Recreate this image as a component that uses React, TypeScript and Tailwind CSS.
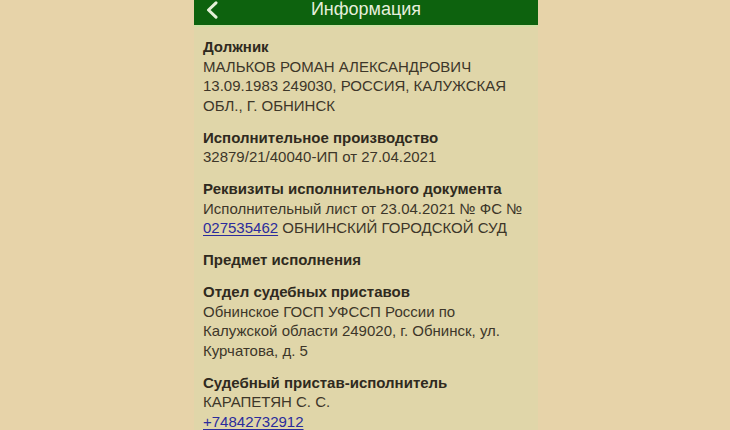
import React from "react"

type Section = {
  title: string
  lines?: React.ReactNode[]
}

const Link = ({ children }: { children: React.ReactNode }) => (
  <span className="text-[#2b2c9c] underline decoration-1 underline-offset-2">{children}</span>
)

const sections: Section[] = [
  {
    title: "Должник",
    lines: ["МАЛЬКОВ РОМАН АЛЕКСАНДРОВИЧ", "13.09.1983 249030, РОССИЯ, КАЛУЖСКАЯ", "ОБЛ., Г. ОБНИНСК"],
  },
  {
    title: "Исполнительное производство",
    lines: ["32879/21/40040-ИП от 27.04.2021"],
  },
  {
    title: "Реквизиты исполнительного документа",
    lines: [
      "Исполнительный лист от 23.04.2021 № ФС №",
      <>
        <Link>027535462</Link> ОБНИНСКИЙ ГОРОДСКОЙ СУД
      </>,
    ],
  },
  { title: "Предмет исполнения" },
  {
    title: "Отдел судебных приставов",
    lines: ["Обнинское ГОСП УФССП России по", "Калужской области 249020, г. Обнинск, ул.", "Курчатова, д. 5"],
  },
  {
    title: "Судебный пристав-исполнитель",
    lines: ["КАРАПЕТЯН С. С.", <Link>+74842732912</Link>],
  },
]

export default function App() {
  return (
    <div
      className="flex justify-center w-[730px] h-[430px] overflow-hidden bg-[#e7d3a9]"
      style={{ fontFamily: '"Liberation Sans", Arial, sans-serif' }}
    >
      <div className="flex flex-col w-[344px] h-full bg-[#e0d6a9] ml-[2px]">
        <div className="relative flex justify-center h-[27px] bg-[#0d620e] border-b-2 border-[#cfe0a6] shrink-0">
          <svg className="absolute left-[10px] top-[1px]" width="16" height="18" viewBox="0 0 16 18">
            <path d="M12 1.8 L4.5 9 L12 16.2" fill="none" stroke="#e4f0d8" strokeWidth="3" strokeLinecap="round" strokeLinejoin="round" />
          </svg>
          <span className="text-[18px] leading-[20px] text-[#e6efdc] mt-[-1px]">Информация</span>
        </div>
        <div className="flex flex-col gap-[12.5px] px-[9px] pt-[10px] text-[15px] leading-[19.5px] text-[#3d3629]">
          {sections.map((s, i) => (
            <div key={i} className="flex flex-col">
              <div className="font-bold text-[#2f2a20]">{s.title}</div>
              {s.lines?.map((l, j) => (
                <div key={j} className="whitespace-nowrap">{l}</div>
              ))}
            </div>
          ))}
        </div>
      </div>
    </div>
  )
}
